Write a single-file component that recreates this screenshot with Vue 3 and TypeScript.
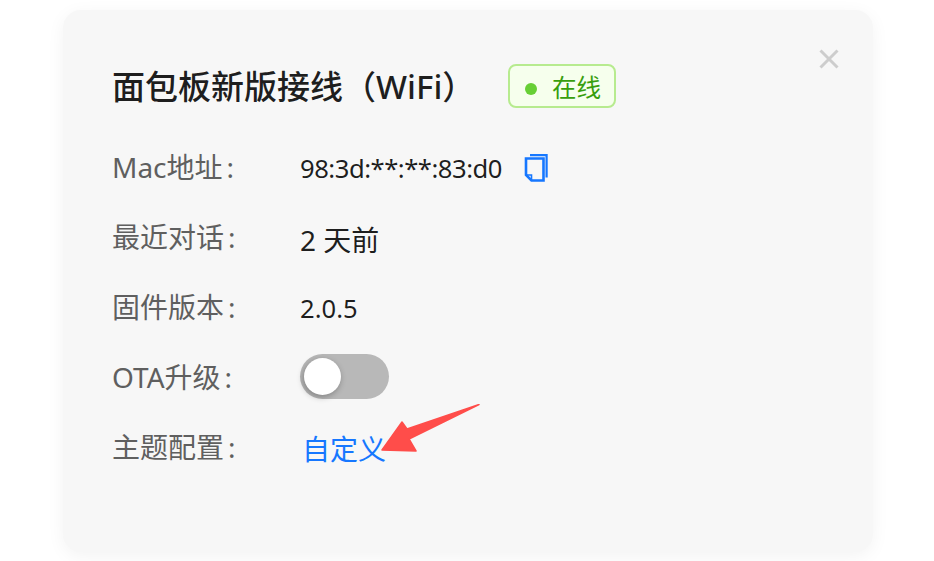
<script setup lang="ts">
const rows = [
  { label: '最近对话', value: '2 天前', cjk: true },
  { label: '固件版本', value: '2.0.5', cjk: false },
]
</script>

<template>
  <div class="page">
    <section class="card">
      <button class="close" aria-label="关闭">
        <svg width="20" height="20" viewBox="0 0 20 20">
          <path d="M1.5 1.5 18.5 18.5M18.5 1.5 1.5 18.5" fill="none" stroke="#cdcdcd" stroke-width="3" />
        </svg>
      </button>
      <header class="head">
        <h1 class="title">面包板新版接线（WiFi）</h1>
        <span class="tag"><i class="dot"></i>在线</span>
      </header>
      <div class="row">
        <span class="label">Mac地址<span class="colon">:</span></span>
        <span class="value mac">98:3d:**:**:83:d0</span>
        <svg class="copy" width="24" height="28" viewBox="0 0 24 28">
          <path d="M6 1.2H22.6V23.5" fill="none" stroke="#1677ff" stroke-width="2.2" />
          <path d="M2 4.5H19.5V26.5H7.5L2 21Z" fill="none" stroke="#1677ff" stroke-width="2.6" />
          <path d="M2.5 21H7.5V26" fill="none" stroke="#1677ff" stroke-width="1.6" />
        </svg>
      </div>
      <div v-for="r in rows" :key="r.label" class="row">
        <span class="label">{{ r.label }}<span class="colon">:</span></span>
        <span class="value" :class="{ cjk: r.cjk }">{{ r.value }}</span>
      </div>
      <div class="row">
        <span class="label">OTA升级<span class="colon">:</span></span>
        <span class="switch"><i class="knob"></i></span>
      </div>
      <div class="row">
        <span class="label">主题配置<span class="colon">:</span></span>
        <a class="link">自定义</a>
      </div>
      <svg class="arrow" width="110" height="60" viewBox="0 0 110 60">
        <path d="M8 46 28 18 33 25 105 0.5 35 35 42 47Z" fill="#ff4d4a" stroke="#ff4d4a" stroke-width="1.5" stroke-linejoin="round" />
      </svg>
    </section>
  </div>
</template>

<style>
html, body { margin: 0; background: #fff; }
</style>

<style scoped>
.page {
  width: 934px;
  height: 561px;
  padding: 10px 61px 9px 63px;
  box-sizing: border-box;
  overflow: hidden;
  font-family: "Noto Sans", "Noto Sans CJK SC", sans-serif;
}
.card {
  position: relative;
  height: 100%;
  box-sizing: border-box;
  padding: 54px 49px 0;
  background: #f7f7f7;
  border-radius: 18px;
  box-shadow: 0 4px 18px rgba(0, 0, 0, 0.05);
}
.close {
  position: absolute;
  top: 39px;
  right: 34px;
  padding: 0;
  border: 0;
  background: none;
  line-height: 0;
}
.head {
  display: flex;
  align-items: center;
  height: 44px;
  margin-bottom: 23px;
}
.title {
  margin: 2px 47px 0 0;
  width: 349px;
  font-size: 33px;
  font-weight: 500;
  line-height: 44px;
  white-space: nowrap;
  color: rgba(0, 0, 0, 0.88);
}
.tag {
  display: inline-flex;
  align-items: center;
  box-sizing: border-box;
  width: 108px;
  height: 44px;
  padding-left: 15px;
  border: 2px solid #b7eb8f;
  border-radius: 8px;
  background: #f6ffed;
  color: #389e0d;
  font-size: 24.5px;
}
.dot {
  width: 12px;
  height: 12px;
  margin-right: 15px;
  margin-top: 6px;
  border-radius: 50%;
  background: #67cf35;
}
.row {
  display: flex;
  align-items: center;
  height: 70px;
  font-size: 28px;
}
.label {
  width: 188px;
  flex: none;
  color: #5f5f5f;
}
.colon {
  margin-left: 4px;
}
.value {
  margin-top: 5px;
  font-size: 25.6px;
  color: rgba(0, 0, 0, 0.88);
}
.value.mac {
  letter-spacing: -0.47px;
}
.value.cjk {
  font-size: 28px;
}
.copy {
  margin-left: 22px;
  margin-top: 3px;
}
.switch {
  position: relative;
  display: block;
  width: 89px;
  height: 45px;
  border-radius: 23px;
  background: #b8b8b8;
}
.knob {
  position: absolute;
  left: 4px;
  top: 4px;
  width: 37px;
  height: 37px;
  border-radius: 50%;
  background: #fff;
  box-shadow: -1px 2px 6px rgba(0, 0, 0, 0.3);
}
.link {
  margin-left: 2px;
  margin-top: 4px;
  color: #1677ff;
  font-size: 28px;
}
.arrow {
  position: absolute;
  left: 311px;
  top: 394px;
}
</style>
